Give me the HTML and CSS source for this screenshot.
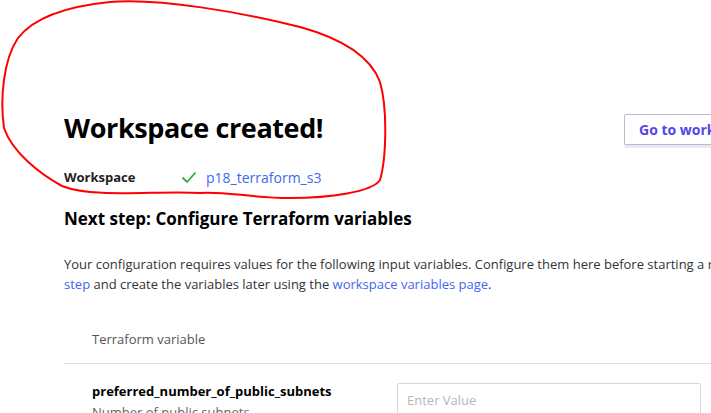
FILE: index.html
```html
<!DOCTYPE html>
<html>
<head>
<meta charset="utf-8">
<link rel="stylesheet" href="styles.css">
</head>
<body>
<div class="page">
  <div class="header">
    <h1 class="title">Workspace created!</h1>
    <button class="btn">Go to workspace overview</button>
  </div>
  <div class="ws-row">
    <span class="ws-label">Workspace</span>
    <svg class="check" width="16" height="13" viewBox="0 0 16 13"><path d="M1.5 6.5 L6 11 L14.5 1.5" fill="none" stroke="#2fae3c" stroke-width="1.8"/></svg>
    <a class="link ws-link" href="#">p18_terraform_s3</a>
  </div>
  <h2 class="next">Next step: Configure Terraform variables</h2>
  <p class="desc">Your configuration requires values for the following input variables. Configure them here before starting a run, or <a class="link" href="#">skip this</a><br><a class="link" href="#">step</a> and create the variables later using the <a class="link" href="#">workspace variables page</a>.</p>
  <div class="table">
    <div class="thead">Terraform variable</div>
    <div class="trow">
      <div class="var">
        <div class="var-name">preferred_number_of_public_subnets</div>
        <div class="var-desc">Number of public subnets</div>
      </div>
      <input class="input" type="text" placeholder="Enter Value">
    </div>
  </div>
</div>
<svg class="scribble" width="711" height="413" viewBox="0 0 711 413">
  <path d="M200 193 C160 190 95 199 62 186 C40 174 12 152 4 128 C0 100 3 60 18 38 C35 16 70 6 110 2 C160 -2 240 12 300 27 C340 38 370 55 380 82 C388 110 386 160 380 180 C372 192 330 198 290 198 C250 198 225 191 200 193 Z" fill="none" stroke="#ff0000" stroke-width="2"/>
</svg>
</body>
</html>
```
FILE: styles.css
```css
html, body {
  margin: 0;
  padding: 0;
  background: #fff;
  overflow: hidden;
}
body {
  width: 711px;
  height: 413px;
  position: relative;
  font-family: "Open Sans", "Noto Sans", sans-serif;
  color: #1f1f1f;
}
.page {
  width: 1000px;
  padding: 108px 0 0 64px;
}
.header {
  display: grid;
  grid-template-columns: 560px auto;
  align-items: start;
}
.title {
  margin: 0;
  font-size: 27px;
  font-weight: 700;
  line-height: 40px;
  color: #000;
  letter-spacing: -0.4px;
}
.btn {
  justify-self: start;
  margin-top: 6px;
  height: 31px;
  padding: 0 14px;
  background: #fff;
  border: 1px solid #b7bbd3;
  border-radius: 2px;
  box-shadow: 0 3px 0 #e8eaef;
  font-family: "Open Sans", sans-serif;
  font-size: 14px;
  font-weight: 700;
  color: #5546e6;
  white-space: nowrap;
}
.ws-row {
  display: flex;
  align-items: center;
  height: 22px;
  margin-top: 18px;
  font-size: 13px;
}
.ws-label {
  font-weight: 700;
  color: #222;
  width: 117px;
}
.check {
  margin-right: 9px;
}
.link {
  color: #3f66f2;
  text-decoration: none;
}
.ws-link {
  font-size: 14px;
}
.next {
  margin: 19px 0 0;
  font-size: 17px;
  line-height: 24px;
  font-weight: 700;
  color: #000;
}
.desc {
  margin: 23px 0 0;
  font-size: 13px;
  line-height: 20px;
  color: #333;
  white-space: nowrap;
}
.table {
  margin-top: 35px;
  width: 700px;
}
.thead {
  padding: 0 0 14px 28px;
  font-size: 13px;
  line-height: 20px;
  color: #555;
  border-bottom: 1px solid #dfe1e8;
}
.trow {
  display: flex;
  align-items: flex-start;
  padding: 17px 0 0 28px;
}
.var {
  width: 305px;
}
.var-name {
  font-size: 13px;
  font-weight: 700;
  line-height: 20px;
  color: #000;
}
.var-desc {
  font-size: 13px;
  line-height: 22px;
  color: #666;
}
.input {
  box-sizing: border-box;
  width: 304px;
  height: 34px;
  margin-top: 2px;
  padding: 0 9px;
  border: 1px solid #d5d7e0;
  border-radius: 2px;
  font-family: "Open Sans", sans-serif;
  font-size: 13px;
  color: #333;
}
.input::placeholder {
  color: #b5b5b5;
}
.scribble {
  position: absolute;
  left: 0;
  top: 0;
  pointer-events: none;
}
```
